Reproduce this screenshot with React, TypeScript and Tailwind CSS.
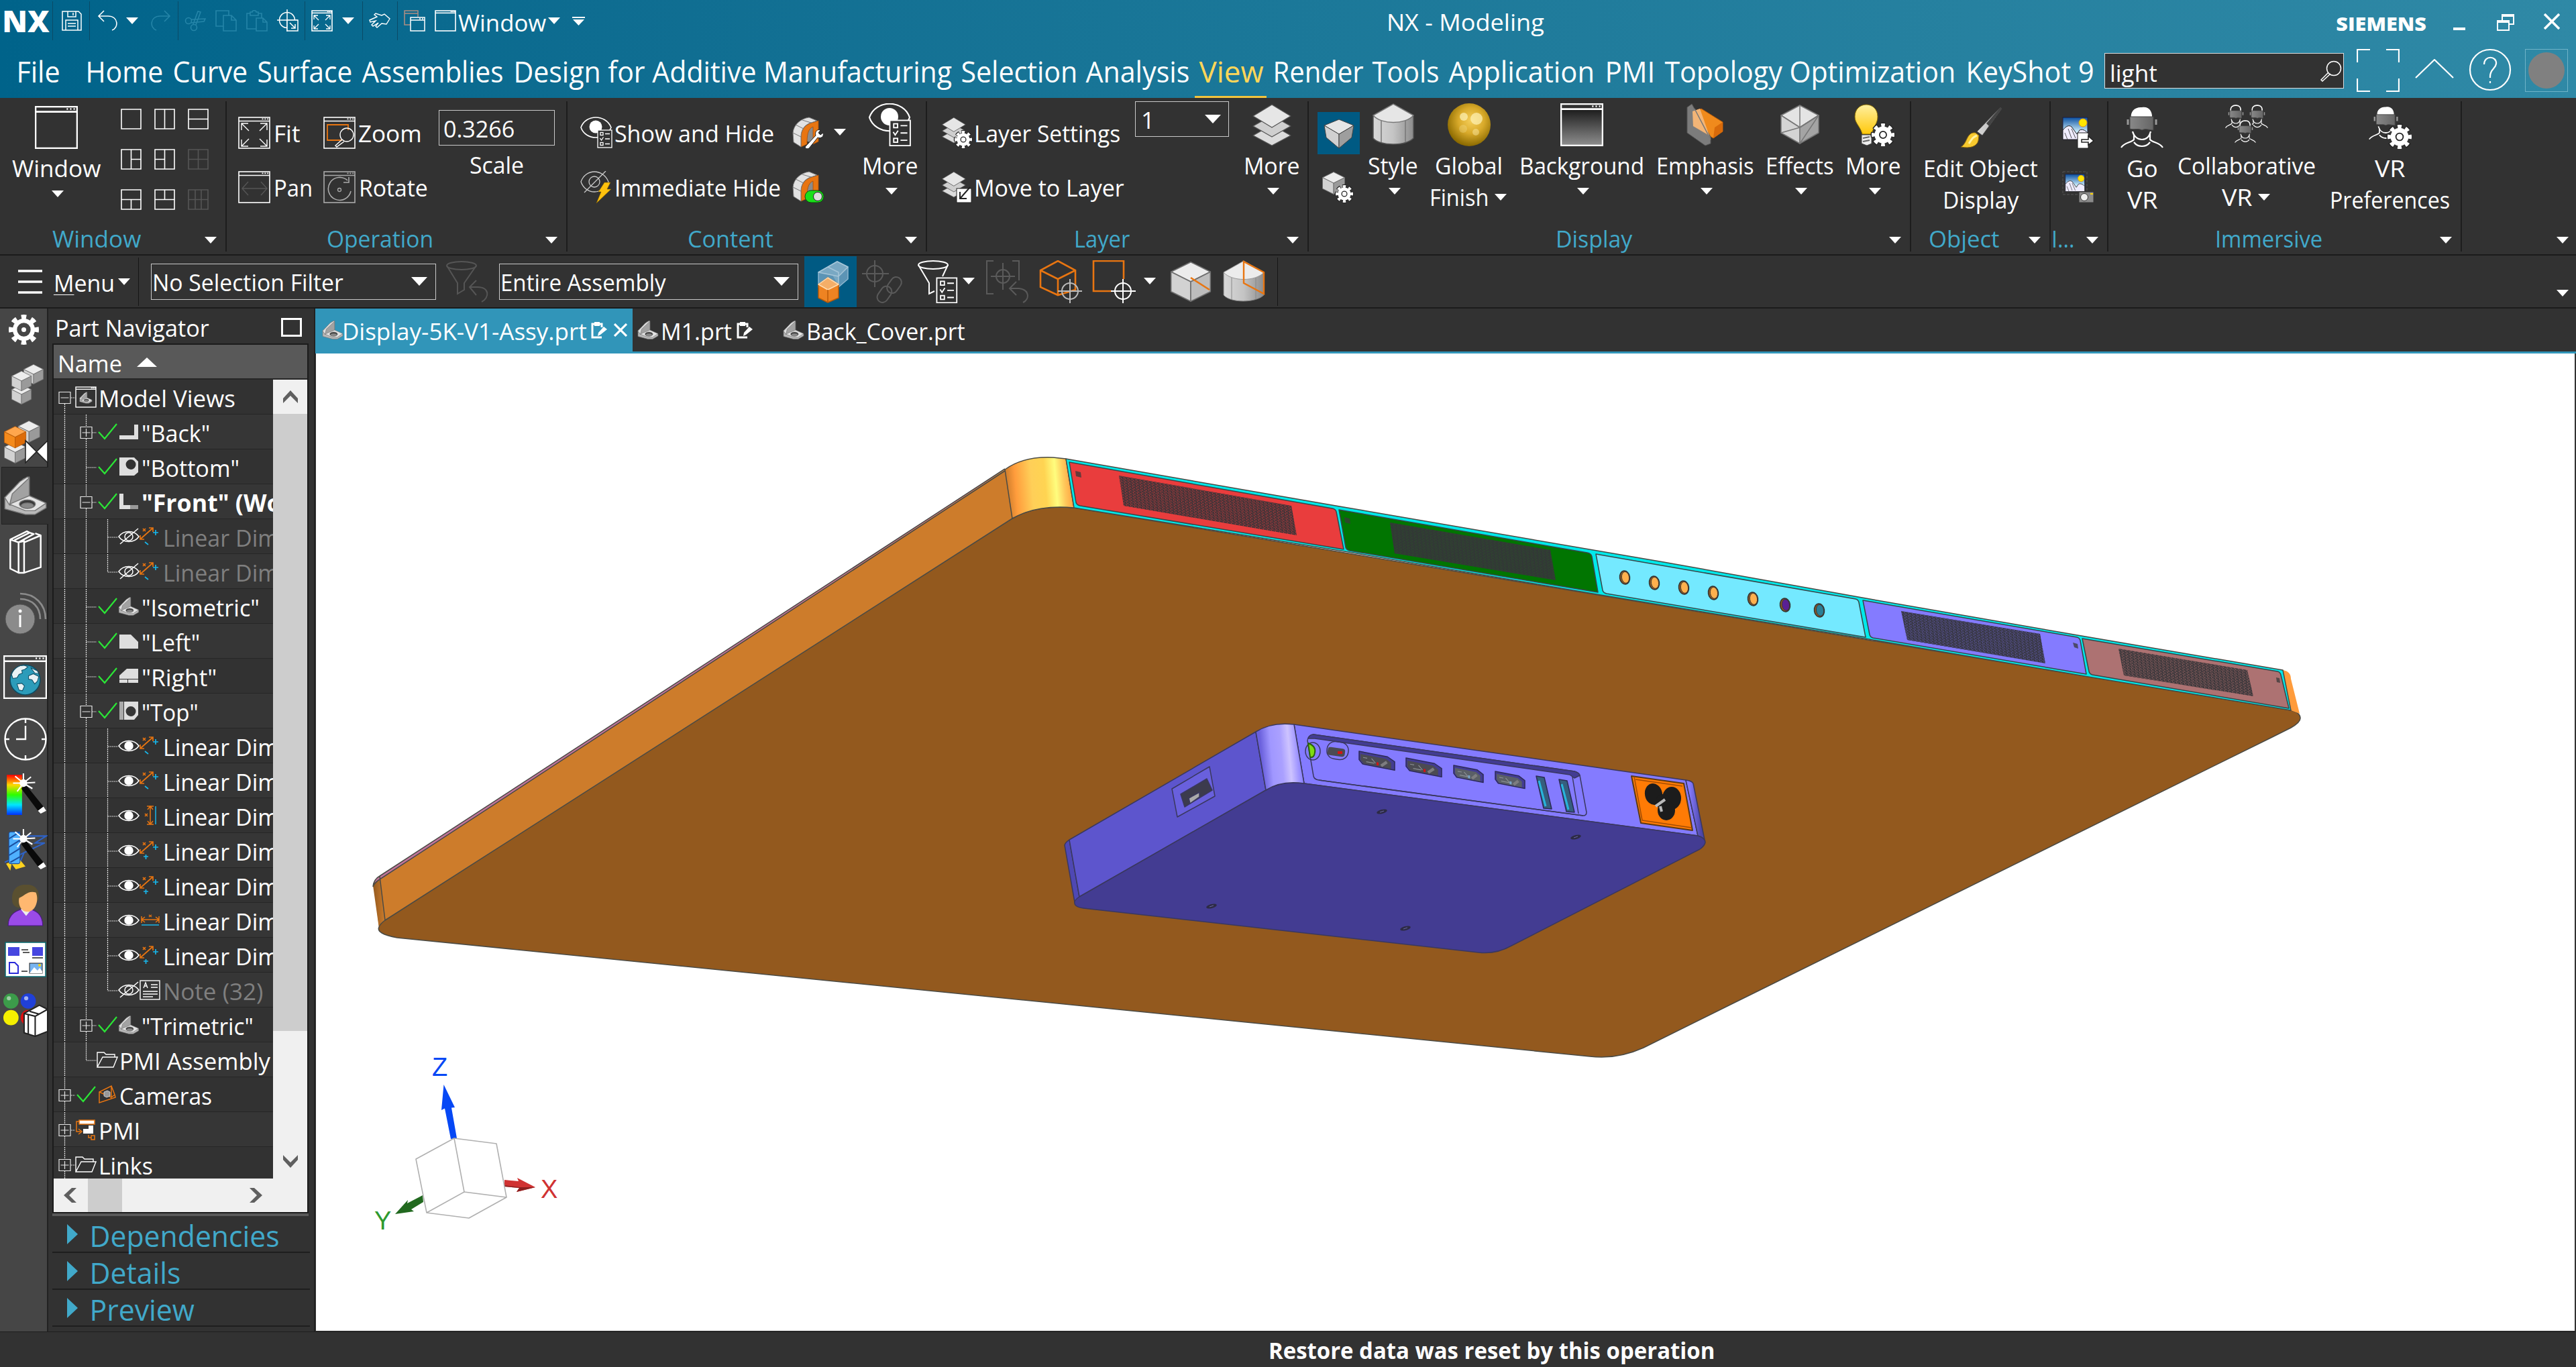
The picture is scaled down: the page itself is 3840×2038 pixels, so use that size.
import React, { useLayoutEffect, useRef, useState } from 'react';
import type { ReactNode } from 'react';

/* Text squeezed or stretched horizontally so that its ink fills the width its class gives. */
function Fit({ className = '', children }: { className?: string; children: ReactNode }) {
  const outer = useRef<HTMLDivElement>(null);
  const inner = useRef<HTMLSpanElement>(null);
  const [fit, setFit] = useState({ scale: 1, bearing: 0 });
  useLayoutEffect(() => {
    if (outer.current && inner.current && inner.current.offsetWidth > 0) {
      const bearing = parseFloat(getComputedStyle(inner.current).fontSize) * 0.06;
      setFit({ scale: (outer.current.clientWidth + 2 * bearing) / inner.current.offsetWidth, bearing });
    }
  }, []);
  return (
    <div ref={outer} className={`shrink-0 whitespace-nowrap ${className}`}>
      <span ref={inner} className="inline-block origin-left" style={{ transform: `translateX(${-fit.bearing}px) scaleX(${fit.scale})` }}>
        {children}
      </span>
    </div>
  );
}

function Svg({ vb, className, children }: { vb: string; className: string; children: ReactNode }) {
  return (
    <svg viewBox={vb} className={`shrink-0 block ${className}`} fill="none" stroke="none">
      {children}
    </svg>
  );
}

const Caret = ({ className = '' }: { className?: string }) => (
  <Svg vb="0 0 18 10" className={`w-[18px] h-[10px] ${className}`}>
    <path d="M0 0H18L9 10Z" fill="#fff" />
  </Svg>
);
const BigCaret = ({ className = '' }: { className?: string }) => (
  <Svg vb="0 0 24 13" className={`w-[24px] h-[13px] ${className}`}>
    <path d="M0 0H24L12 13Z" fill="#fff" />
  </Svg>
);

/* ---------- shared drawing parts ---------- */
function Gear({ cx, cy, r }: { cx: number; cy: number; r: number }) {
  return (
    <g>
      <circle cx={cx} cy={cy} r={r * 0.78} stroke="#222" strokeWidth={r * 0.62} pathLength={16} strokeDasharray="1.25 0.75" strokeDashoffset={0.6} />
      <circle cx={cx} cy={cy} r={r * 0.78} stroke="#fff" strokeWidth={r * 0.44} pathLength={16} strokeDasharray="1 1" strokeDashoffset={0.5} />
      <circle cx={cx} cy={cy} r={r * 0.74} fill="#fff" />
      <circle cx={cx} cy={cy} r={r * 0.3} fill="#fff" stroke="#222" strokeWidth={r * 0.1} />
    </g>
  );
}
function Frame({ s = 48, color = '#fff', sw = 1.6 }: { s?: number; color?: string; sw?: number }) {
  return (
    <g stroke={color} strokeWidth={sw}>
      <rect x={1} y={1} width={s - 2} height={s - 2} />
      <path d={`M1 ${s * 0.135}H${s - 1}`} />
      <path d={`M${s * 0.74} ${s * 0.07}h2M${s * 0.82} ${s * 0.07}h2M${s * 0.9} ${s * 0.07}h2`} />
    </g>
  );
}
const Cube = ({ x = 0, y = 0, s = 48, left = '#d2d2d2', right = '#9a9a9a', top = '#ececec', line = '#6e6e6e' }) => (
  <g transform={`translate(${x} ${y}) scale(${s / 48})`} stroke={line} strokeWidth={1.2} strokeLinejoin="round">
    <path d="M24 2L46 13L24 24L2 13Z" fill={top} />
    <path d="M2 13L24 24V46L2 35Z" fill={left} />
    <path d="M46 13L24 24V46L46 35Z" fill={right} />
  </g>
);
const Bracket = ({ x = 0, y = 0, s = 48 }) => (
  <g transform={`translate(${x} ${y}) scale(${s / 48})`} stroke="#777" strokeWidth={1} strokeLinejoin="round">
    <path d="M2 26L22 6L28 4V24L20 28L46 33V37L34 44H24L2 38Z" fill="#b9b9b9" />
    <path d="M2 26L22 8L28 5V25L8 34Z" fill="#a2a2a2" />
    <path d="M2 26L18 9L26 4L28 5L10 22L7 34Z" fill="#dedede" />
    <path d="M7 33L28 24L46 32L34 40H24Z" fill="#e4e4e4" />
    <ellipse cx="26" cy="33" rx="8.5" ry="4.6" fill="#3a3a3a" />
    <ellipse cx="26" cy="34.6" rx="6.5" ry="2.8" fill="#888" />
  </g>
);
const Sheets = () => (
  <g stroke="#555" strokeWidth={1.3} strokeLinejoin="round">
    <path d="M32 32L60 48L32 63L4 48Z" fill="#dcdcdc" />
    <path d="M32 18L60 34L32 50L4 34Z" fill="#cfcfcf" />
    <path d="M32 2L60 19L32 36L4 19Z" fill="#e6e6e6" />
  </g>
);
const Bowl = () => (
  <g strokeLinejoin="round">
    <path d="M19 14H32V40L20 36Z" fill="#8b8b8b" />
    <path d="M13 45V28C14 18 20 12 29 9L39 6V37L31 41V15C23 18 22 28 22 41Z" fill="#e87511" stroke="#a84f06" strokeWidth=".8" />
    <path d="M1 24C2 12 12 3 25 1L37 6L28 9C18 12 13 20 13 30V45L2 38Z" fill="#e2e2e2" stroke="#777" />
    <path d="M5 12L17 18M1 24L13 30M15 5L28 9" stroke="#777" />
  </g>
);
const ListCard = ({ x, y, s }: { x: number; y: number; s: number }) => (
  <g transform={`translate(${x} ${y}) scale(${s})`} stroke="#fff" strokeWidth={1.3}>
    <rect x="1" y="1" width="21" height="26" fill="#323232" />
    <rect x="5" y="4.5" width="4" height="4" />
    <rect x="5" y="19.5" width="4" height="4" />
    <path d="M4.5 13L6.5 16L9.5 11.5M12 6.5h7M12 14h7M12 21.5h7" />
  </g>
);
const EyeShape = ({ slash = false }) => (
  <g stroke="#fff" strokeWidth={1.5}>
    <path d="M1 16C8 6 24 6 31 16C24 26 8 26 1 16Z" />
    {slash ? (
      <g>
        <circle cx="16" cy="16" r="6" />
        <path d="M3 27L30 4" />
      </g>
    ) : (
      <circle cx="16" cy="16" r="6" fill="#fff" />
    )}
  </g>
);

/* ---------- title bar ---------- */
const Sep = ({ className = '' }: { className?: string }) => <div className={`w-px h-[58px] bg-[#0a4a66] shrink-0 ${className}`} />;

function TitleBar() {
  const dim = '#2585a8';
  return (
    <div className="flex items-center h-[62px] shrink-0">
      <Fit className="ml-[6px] w-[65px] text-[45px] leading-[60px] font-extrabold">NX</Fit>
      <Sep className="ml-[7px]" />
      <Svg vb="0 0 30 30" className="ml-[13px] w-[30px] h-[30px]">
        <path d="M1 1H25L29 5V29H1ZM9 1V9H21V1M17 3V7M6 29V14H24V29M9 19H21M9 23H21" stroke="#fff" strokeWidth="1.5" />
      </Svg>
      <Sep className="ml-[11px]" />
      <Svg vb="0 0 30 32" className="ml-[11px] w-[30px] h-[32px]">
        <path d="M10 1L2 9L10 17M2 9H16C32 9 32 27 22 30" stroke="#fff" strokeWidth="1.6" />
      </Svg>
      <Caret className="ml-[13px]" />
      <Svg vb="0 0 30 32" className="ml-[19px] w-[30px] h-[32px]">
        <path d="M20 1L28 9L20 17M28 9H14C-2 9 -2 27 8 30" stroke={dim} strokeWidth="1.6" />
      </Svg>
      <Sep className="ml-[10px]" />
      <Svg vb="0 0 32 32" className="ml-[9px] w-[32px] h-[32px]">
        <g stroke={dim} strokeWidth="1.6">
          <circle cx="6" cy="16" r="4.5" /><circle cx="14" cy="26" r="4.5" />
          <path d="M10 14L31 13L29 17L10 19M13 21L20 2L24 3L17 22" />
        </g>
      </Svg>
      <Svg vb="0 0 32 32" className="ml-[14px] w-[32px] h-[32px]">
        <path d="M12 24H1V1H20V8M12 8H24L31 15V31H12ZM24 8V15H31" stroke={dim} strokeWidth="1.6" />
      </Svg>
      <Svg vb="0 0 32 32" className="ml-[14px] w-[32px] h-[32px]">
        <path d="M15 28H1V5H6V8H18V5H23V12M6 5V3H9C9 0 15 0 15 3H18V5M15 12H25L31 18V31H15ZM25 12V18H31" stroke={dim} strokeWidth="1.6" />
      </Svg>
      <Svg vb="0 0 32 34" className="ml-[14px] w-[32px] h-[34px]">
        <g stroke="#fff" strokeWidth="1.5">
          <circle cx="15" cy="16" r="11.5" /><path d="M15 0V33M0 16H31" />
          <rect x="15" y="16" width="16" height="16" fill="#05688c" /><path d="M19 20L27 28M27 22V28H21" />
        </g>
      </Svg>
      <Sep className="ml-[9px]" />
      <Svg vb="0 0 32 32" className="ml-[9px] w-[32px] h-[32px]">
        <Frame s={32} />
        <path d="M4 14V8H10M4 8L11 15M28 14V8H22M28 8L21 15M4 23V28H10M4 28L11 21M28 23V28H22M28 28L21 21" stroke="#fff" strokeWidth="1.3" />
      </Svg>
      <Caret className="ml-[14px]" />
      <Sep className="ml-[12px]" />
      <Svg vb="0 0 32 24" className="ml-[9px] w-[32px] h-[24px]">
        <path d="M23 2L31 9L26 17L19 16L12 22L10 20L14 15L6 20L4 18L10 12L2 14L1 11L12 6L8 3L10 1L19 4Z" stroke="#fff" strokeWidth="1.4" />
      </Svg>
      <Sep className="ml-[10px]" />
      <Svg vb="0 0 32 32" className="ml-[9px] w-[32px] h-[32px]">
        <path d="M10 22H1V1H21V10M1 5H21" stroke="#b08f83" strokeWidth="1.5" />
        <path d="M10 11H31V31H10ZM10 15H31M23 13h2M27 13h2" stroke="#fff" strokeWidth="1.5" />
      </Svg>
      <Svg vb="0 0 32 32" className="ml-[14px] w-[32px] h-[32px]"><Frame s={32} /></Svg>
      <Fit className="ml-[5px] mt-[4px] w-[127px] text-[35px] leading-[47px]">Window</Fit>
      <Caret className="ml-[5px]" />
      <Svg vb="0 0 19 13" className="ml-[18px] w-[19px] h-[13px]">
        <path d="M0 1H19" stroke="#fff" strokeWidth="2" /><path d="M1 4H18L9.500 13Z" fill="#fff" />
      </Svg>
      <Fit className="ml-[1197px] mt-[3px] w-[231px] text-[35px] leading-[47px]">NX - Modeling</Fit>
      <Fit className="ml-auto mt-[7px] w-[131px] text-[28px] leading-[40px] font-extrabold">SIEMENS</Fit>
      <div className="ml-[42px] mt-[24px] w-[18px] h-[4px] bg-white shrink-0" />
      <Svg vb="0 0 26 25" className="ml-[47px] mt-[4px] w-[26px] h-[25px]">
        <path d="M8 9V3H25V15H19M1 12H18V24H1ZM8 3V5M1 12V13" stroke="#fff" strokeWidth="2" />
        <path d="M7 0H26V4H7ZM0 9H19V13H0Z" fill="#fff" />
      </Svg>
      <Svg vb="0 0 24 24" className="ml-[44px] mr-[24px] mt-[2px] w-[24px] h-[24px]">
        <path d="M1 1L23 23M23 1L1 23" stroke="#fff" strokeWidth="3.6" />
      </Svg>
    </div>
  );
}

function TabRow() {
  return (
    <div className="flex items-start h-[84px] pt-[16px] text-[43px] leading-[58px] shrink-0">
      <Fit className="ml-[27px] w-[60px]">File</Fit>
      <Fit className="ml-[43px] w-[111px]">Home</Fit>
      <Fit className="ml-[19px] w-[107px]">Curve</Fit>
      <Fit className="ml-[19px] w-[137px]">Surface</Fit>
      <Fit className="ml-[19px] w-[206px]">Assemblies</Fit>
      <Fit className="ml-[20px] w-[648px]">Design for Additive Manufacturing</Fit>
      <Fit className="ml-[19px] w-[169px]">Selection</Fit>
      <Fit className="ml-[17px] w-[150px]">Analysis</Fit>
      <div className="ml-[19px] w-[91px] text-[#ffd659]">
        <Fit className="w-[91px]">View</Fit>
        <div className="-ml-[9px] mt-[7px] w-[107px] h-[3px] bg-[#f2c43d]" />
      </div>
      <Fit className="ml-[19px] w-[130px]">Render</Fit>
      <Fit className="ml-[18px] w-[95px]">Tools</Fit>
      <Fit className="ml-[19px] w-[212px]">Application</Fit>
      <Fit className="ml-[21px] w-[70px]">PMI</Fit>
      <Fit className="ml-[19px] w-[429px]">Topology Optimization</Fit>
      <Fit className="ml-[20px] w-[186px]">KeyShot 9</Fit>
      <div className="ml-[18px] mt-[1px] w-[357px] h-[53px] bg-[#323232] border-[1.5px] border-[#dcdcdc] flex items-center shrink-0">
        <Fit className="ml-[9px] mt-[6px] w-[67px] text-[35px] leading-[47px]">light</Fit>
        <Svg vb="0 0 32 32" className="ml-auto mr-[2px] w-[32px] h-[32px]">
          <circle cx="20" cy="12" r="10.500" stroke="#fff" strokeWidth="1.5" />
          <path d="M12 18L1 29L3 31L15 20" stroke="#fff" strokeWidth="1.5" />
        </Svg>
      </div>
      <Svg vb="0 0 64 64" className="ml-[19px] -mt-[5px] w-[64px] h-[64px]">
        <path d="M1 20V1H20M44 1H63V20M63 44V63H44M20 63H1V44" stroke="#fff" strokeWidth="2.2" />
      </Svg>
      <Svg vb="0 0 58 30" className="ml-[23px] mt-[10px] w-[58px] h-[30px]">
        <path d="M1 28L29 1L57 28" stroke="#fff" strokeWidth="2.2" />
      </Svg>
      <Svg vb="0 0 64 64" className="ml-[22px] -mt-[6px] w-[64px] h-[64px]">
        <circle cx="32" cy="32" r="30" stroke="#fff" strokeWidth="2.2" />
        <path d="M23 24C23 10 42 11 41 23C40 31 32 31 32 42V44M32 49V52" stroke="#fff" strokeWidth="2.2" />
      </Svg>
      <div className="ml-[20px] -mt-[5px] w-[64px] h-[64px] border border-[#6fb3c8] flex items-center justify-center shrink-0">
        <div className="w-[54px] h-[54px] rounded-full bg-[#808080]" />
      </div>
    </div>
  );
}

/* ---------- ribbon ---------- */
function Group({ className, label, labelClass, children }: { className: string; label: string; labelClass: string; children?: ReactNode }) {
  return (
    <div className={`flex flex-col h-[224px] shrink-0 border-r-2 border-[#1d1d1d] ${className}`}>
      <div className="flex items-start h-[181px]">{children}</div>
      <div className="flex items-center h-[43px] text-[#41a9ca]">
        <Fit className={`mt-[3px] text-[35px] leading-[43px] ${labelClass}`}>{label}</Fit>
        <Caret className="ml-auto mt-[8px] mr-[13px]" />
      </div>
    </div>
  );
}
function Big({ className, icon, label, labelClass, line2, line2Class = '', caret, inlineCaret }: { className: string; icon: ReactNode; label: string; labelClass: string; line2?: string; line2Class?: string; caret?: boolean; inlineCaret?: boolean }) {
  return (
    <div className={`flex flex-col items-center shrink-0 ${className}`}>
      {icon}
      <Fit className={`mt-[5px] text-[35px] leading-[47px] ${labelClass}`}>{label}</Fit>
      {line2 && (
        <div className="flex items-center">
          <Fit className={`text-[35px] leading-[47px] ${line2Class}`}>{line2}</Fit>
          {inlineCaret && <Caret className="ml-[11px]" />}
        </div>
      )}
      {caret && <Caret className="ml-[4px] mt-[10px]" />}
    </div>
  );
}
const S64 = ({ children, className = 'w-[64px] h-[64px]' }: { children: ReactNode; className?: string }) => <Svg vb="0 0 64 64" className={className}>{children}</Svg>;
const S48 = ({ children, className = '' }: { children: ReactNode; className?: string }) => <Svg vb="0 0 48 48" className={`w-[48px] h-[48px] ${className}`}>{children}</Svg>;

const Head = ({ hair = true }: { hair?: boolean }) => (
  <g>
    {hair ? <path d="M16 18C14 8 22 1 32 2C42 0 48 8 47 18Z" fill="#fff" /> : <path d="M17 18C14 6 24 1 32 2C42 1 48 8 46 18" stroke="#fff" strokeWidth="3" />}
    <path d="M11 20V28M53 20V28" stroke="#999" strokeWidth="3" />
    <path d="M14 16H49V36C42 36 38 33 32 36C26 33 20 36 14 34Z" fill="url(#goggle)" stroke="#444" />
    <path d="M18 38C20 46 26 50 32 50C38 50 43 46 45 38" stroke="#fff" strokeWidth="2.200" />
    <path d="M20 42V50C16 55 6 54 1 62M44 42V50C48 55 58 54 63 62M20 54C26 62 38 62 44 54" stroke="#fff" strokeWidth="2.200" />
  </g>
);
const Picture = () => (
  <g>
    <rect x="1" y="1" width="37" height="33" fill="url(#sky)" stroke="#1d1d3d" />
    <circle cx="31" cy="9" r="6" fill="#ffe600" stroke="#e8960c" />
    <path d="M1 34V20C6 14 10 12 14 15L22 26L26 20C30 18 34 20 38 24V34Z" fill="#efecff" stroke="#222" />
    <path d="M9 18L14 32M14 18L20 32M4 24L8 34" stroke="#555" />
  </g>
);

function WindowGrid() {
  const on = '#fff';
  const off = '#555';
  const cells: [string, string][] = [
    ['', on], ['M15.500 1V30', on], ['M1 15.500H30', on],
    ['M15.500 1V30M15.500 15.500H30', on], ['M15.500 1V30M1 15.500H15.500', on], ['M15.500 1V30M1 15.500H30', off],
    ['M1 15.500H30M15.500 15.500V30', on], ['M1 15.500H30M15.500 1V15.500', on], ['M1 15.500H30M11 1V30M20 1V30', off],
  ];
  return (
    <div className="ml-[32px] mt-[11px] grid grid-cols-3 gap-x-[19px] gap-y-[29px]">
      {cells.map(([d, c], i) => (
        <Svg key={i} vb="0 0 31 31" className="w-[31px] h-[31px]">
          <path d={`M1 1H30V30H1Z${d}`} stroke={c} strokeWidth="1.6" />
        </Svg>
      ))}
    </div>
  );
}

function Ribbon() {
  return (
    <div className="flex h-[235px] pt-[5px] border-b-2 border-[#1b1b1b] shrink-0">
      <Group className="w-[338px]" label="Window" labelClass="ml-[80px] w-[128px]">
        <Big className="ml-[20px] w-[128px] pt-[7px]" icon={<S64><Frame s={64} sw={2.6} /></S64>} label="Window" labelClass="w-[128px]" caret />
        <WindowGrid />
      </Group>

      <Group className="w-[508px]" label="Operation" labelClass="ml-[151px] w-[155px]">
        <div className="ml-[17px] w-[127px] pt-[23px] flex flex-col gap-[33px] shrink-0">
          <div className="flex items-center h-[48px]">
            <S48><Frame /><path d="M5 20V10H15M5 10L16 21M43 20V10H33M43 10L32 21M5 34V44H15M5 44L16 33M43 34V44H33M43 44L32 33" stroke="#fff" strokeWidth="1.4" /></S48>
            <Fit className="ml-[7px] w-[35px] text-[35px] leading-[47px]">Fit</Fit>
          </div>
          <div className="flex items-center h-[48px]">
            <S48><Frame /><path d="M6 26H43M15 16L6 26L15 36M34 16L43 26L34 36" stroke="#555" strokeWidth="1.4" /></S48>
            <Fit className="ml-[7px] w-[54px] text-[35px] leading-[47px]">Pan</Fit>
          </div>
        </div>
        <div className="w-[172px] pt-[23px] flex flex-col gap-[33px] shrink-0">
          <div className="flex items-center h-[48px]">
            <S48>
              <Frame />
              <path d="M28 35H6V12H37V20" stroke="#e87511" strokeWidth="1.8" />
              <circle cx="35" cy="27" r="10" stroke="#fff" strokeWidth="1.4" />
              <path d="M28 34L18 43L20 45L31 37" stroke="#fff" strokeWidth="1.4" />
            </S48>
            <Fit className="ml-[6px] w-[91px] text-[35px] leading-[47px]">Zoom</Fit>
          </div>
          <div className="flex items-center h-[48px]">
            <S48>
              <Frame color="#aaa" />
              <path d="M41 30A17 17 0 1 1 36 14M30 17H38V9" stroke="#aaa" strokeWidth="1.6" />
              <circle cx="24" cy="28" r="2.500" stroke="#aaa" strokeWidth="1.3" />
            </S48>
            <Fit className="ml-[7px] w-[99px] text-[35px] leading-[47px]">Rotate</Fit>
          </div>
        </div>
        <div className="flex flex-col items-center mt-[13px] shrink-0">
          <div className="w-[173px] h-[53px] border-[1.5px] border-[#c9c9c9] flex items-center">
            <Fit className="ml-[8px] mt-[1px] w-[102px] text-[35px] leading-[47px]">0.3266</Fit>
          </div>
          <Fit className="mt-[5px] w-[77px] text-[35px] leading-[47px]">Scale</Fit>
        </div>
      </Group>

      <Group className="w-[536px]" label="Content" labelClass="ml-[181px] w-[124px]">
        <div className="ml-[19px] w-[316px] pt-[23px] flex flex-col gap-[33px] shrink-0">
          <div className="flex items-center h-[48px]">
            <S48>
              <path d="M1 16C8 -4 38 -4 46 16C38 36 8 36 1 16Z" stroke="#fff" strokeWidth="1.6" />
              <circle cx="23" cy="15" r="9.500" fill="#fff" />
              <ListCard x={25} y={19} s={1} />
            </S48>
            <Fit className="ml-[5px] w-[234px] text-[35px] leading-[47px]">Show and Hide</Fit>
          </div>
          <div className="flex items-center h-[48px]">
            <S48>
              <path d="M1 16C8 -4 34 -4 42 16C34 36 8 36 1 16Z" stroke="#ccc" strokeWidth="1.3" />
              <circle cx="21" cy="16" r="8" stroke="#ccc" strokeWidth="1.3" />
              <path d="M6 32L38 0" stroke="#ccc" strokeWidth="1.3" />
              <path d="M36 17H45L40 27H46L24 48L31 31H27Z" fill="#ffc20e" stroke="#7a5a00" strokeWidth=".6" />
            </S48>
            <Fit className="ml-[5px] w-[244px] text-[35px] leading-[47px]">Immediate Hide</Fit>
          </div>
        </div>
        <div className="w-[106px] pt-[23px] flex flex-col gap-[33px] shrink-0">
          <div className="flex items-center h-[48px]">
            <S48>
              <Bowl />
              <path d="M20 44L35 28C33 22 38 18 42 20L39 24L42 27L46 24C48 30 42 33 38 31L25 47C22 49 18 47 20 44Z" fill="#fff" stroke="#222" />
            </S48>
            <Caret className="ml-[14px] mb-[2px]" />
          </div>
          <S48>
            <Bowl />
            <rect x="19" y="29" width="28" height="18" rx="9" fill="#19e019" stroke="#0b4d0b" />
            <circle cx="38" cy="38" r="6.500" fill="#ddd" stroke="#222" />
          </S48>
        </div>
        <Big
          className="w-[80px] pt-[3px]"
          icon={
            <S64>
              <path d="M1 21C10 -6 52 -6 61 21C52 48 10 48 1 21Z" stroke="#fff" strokeWidth="2.2" />
              <circle cx="31" cy="20" r="13" fill="#fff" />
              <ListCard x={30} y={24} s={1.45} />
            </S64>
          }
          label="More" labelClass="w-[80px]" caret
        />
      </Group>

      <Group className="w-[569px]" label="Layer" labelClass="ml-[221px] w-[79px]">
        <div className="ml-[20px] w-[290px] pt-[23px] flex flex-col gap-[33px] shrink-0">
          <div className="flex items-center h-[48px]">
            <S48><g transform="scale(.62)"><Sheets /></g><Gear cx={34} cy={34} r={13} /></S48>
            <Fit className="ml-[4px] w-[214px] text-[35px] leading-[47px]">Layer Settings</Fit>
          </div>
          <div className="flex items-center h-[48px]">
            <S48>
              <g transform="scale(.62)"><Sheets /></g>
              <rect x="24" y="26" width="22" height="21" fill="#fff" stroke="#222" />
              <path d="M44 24L30 40M29 31V41H39" stroke="#222" strokeWidth="2" />
            </S48>
            <Fit className="ml-[4px] w-[220px] text-[35px] leading-[47px]">Move to Layer</Fit>
          </div>
        </div>
        <div className="w-[164px] shrink-0">
          <div className="w-[140px] h-[53px] border-[1.5px] border-[#c9c9c9] flex items-center">
            <Fit className="ml-[10px] mt-[1px] w-[16px] text-[35px] leading-[47px]">1</Fit>
            <BigCaret className="ml-auto mr-[11px]" />
          </div>
        </div>
        <Big className="w-[80px] pt-[3px]" icon={<S64><Sheets /></S64>} label="More" labelClass="w-[80px]" caret />
      </Group>

      <Group className="w-[898px]" label="Display" labelClass="ml-[370px] w-[110px]">
        <div className="ml-[13px] w-[77px] mt-[16px] flex flex-col gap-[25px] shrink-0">
          <div className="w-[63px] h-[63px] bg-[#005a83] flex items-center justify-center">
            <S48>
              <path d="M24 3L46 12L24 25L2 12Z" fill="#e6e6e6" stroke="#444" />
              <path d="M2 12L24 25V46L5 30Z" fill="#d0d0d0" stroke="#444" />
              <path d="M46 12L24 25V46L43 30Z" fill="#9e9e9e" stroke="#444" />
            </S48>
          </div>
          <S48 className="ml-[6px]"><Cube s={36} /><Gear cx={34} cy={34} r={13} /></S48>
        </div>
        <Big
          className="w-[71px] pt-[3px]"
          icon={
            <S64>
              <path d="M2 20V52C12 64 50 64 62 52V20L32 2Z" fill="url(#steel)" stroke="#555" strokeWidth="1.500" />
              <path d="M2 18L32 1L62 18C50 32 14 32 2 18Z" fill="#e6e6e6" stroke="#777" strokeWidth="1.500" />
              <path d="M14 26V58M50 26V58" stroke="#777" strokeWidth="1.500" />
            </S64>
          }
          label="Style" labelClass="w-[71px]" caret
        />
        <Big
          className="ml-[21px] w-[113px] pt-[3px]"
          icon={
            <S64>
              <circle cx="32" cy="32" r="32" fill="url(#gold)" />
              <g fill="#fff3b8" opacity=".7">
                <circle cx="43" cy="23" r="9" /><circle cx="24" cy="20" r="6" /><circle cx="42" cy="43" r="5" opacity=".6" /><circle cx="23" cy="38" r="6" opacity=".35" />
              </g>
            </S64>
          }
          label="Global" labelClass="w-[97px]" line2="Finish" line2Class="w-[84px]" inlineCaret
        />
        <Big
          className="ml-[21px] w-[182px] pt-[3px]"
          icon={<S64><rect x="1" y="9" width="62" height="54" fill="url(#bgfade)" /><Frame s={64} sw={2.6} /></S64>}
          label="Background" labelClass="w-[182px]" caret
        />
        <Big
          className="ml-[22px] w-[141px] pt-[3px]"
          icon={
            <S64>
              <path d="M14 12L26 8L58 28V42L44 52L14 34Z" fill="#f08a1c" stroke="#b85a08" />
              <path d="M46 36L58 28V42L44 52Z" fill="#d86a0a" />
              <path d="M5 6L12 1L40 50V60L32 63L5 44Z" fill="#8a8a8a" fillOpacity=".85" stroke="#555" />
              <path d="M13 12L24 8L38 48L14 34Z" fill="#f3b577" />
              <path d="M16 8L40 54" stroke="#777" strokeWidth="1.500" />
            </S64>
          }
          label="Emphasis" labelClass="w-[141px]" caret
        />
        <Big
          className="ml-[22px] w-[98px] pt-[3px]"
          icon={
            <S64>
              <g stroke="#777" strokeWidth="1.500" strokeLinejoin="round">
                <path d="M32 3L60 18L32 36L4 18Z" fill="#e4e4e4" /><path d="M4 18L32 36V60L4 44Z" fill="#d4d4d4" /><path d="M60 18L32 36V60L60 44Z" fill="#a4a4a4" />
                <path d="M32 3V36L4 44M32 60L60 18M32 36L60 18" />
              </g>
            </S64>
          }
          label="Effects" labelClass="w-[98px]" caret
        />
        <Big
          className="ml-[21px] w-[79px] pt-[3px]"
          icon={
            <S64>
              <path d="M4 20C4 -4 38 -4 38 20C38 30 32 34 29 46H15C12 34 4 30 4 20Z" fill="url(#bulb)" stroke="#8a6d00" />
              <path d="M14 47H29V60L22 63L14 60Z" fill="#eee" stroke="#444" /><path d="M16 52L26 50M16 57L26 55" stroke="#666" strokeWidth="2" />
              <Gear cx={46} cy={47} r={17} />
            </S64>
          }
          label="More" labelClass="w-[79px]" caret
        />
      </Group>

      <Group className="w-[208px]" label="Object" labelClass="ml-[28px] w-[101px]">
        <Big
          className="ml-[20px] w-[167px] pt-[7px]"
          icon={
            <S64>
              <path d="M61 2L63 4L34 44L26 38Z" fill="url(#steel)" stroke="#444" />
              <path d="M61 2L63 4L44 30L40 26Z" fill="#444" />
              <path d="M24 40C10 38 12 56 2 61C16 64 26 60 28 52L29 44Z" fill="#f7c92e" stroke="#7a5a10" />
              <path d="M14 56C18 50 20 46 26 44" stroke="#fff1a0" strokeWidth="3" />
            </S64>
          }
          label="Edit Object" labelClass="w-[167px]" line2="Display" line2Class="w-[109px]"
        />
      </Group>

      <Group className="w-[86px]" label="I..." labelClass="ml-[3px] w-[30px]">
        <div className="ml-[17px] pt-[23px] flex flex-col gap-[33px]">
          <S48>
            <Picture />
            <rect x="23" y="24" width="16" height="23" fill="#fff" stroke="#222" />
            <path d="M29 34H39V29L47 36L39 42V38H29Z" fill="#fff" stroke="#222" strokeWidth="1.500" />
          </S48>
          <S48>
            <rect x="1" y="1" width="36" height="34" stroke="#555" strokeDasharray="4 2" />
            <g transform="translate(4 4) scale(.78)"><Picture /></g>
            <rect x="25" y="31" width="22" height="16" fill="#8b8b8b" stroke="#333" /><circle cx="33" cy="39" r="5.500" fill="#eee" stroke="#333" /><path d="M42 34h4" stroke="#ffd400" strokeWidth="2" />
          </S48>
        </div>
      </Group>

      <Group className="w-[527px]" label="Immersive" labelClass="ml-[161px] w-[156px]">
        <Big className="ml-[19px] w-[62px] pt-[7px]" icon={<S64><Head /></S64>} label="Go" labelClass="w-[43px]" line2="VR" line2Class="w-[41px]" />
        <Big
          className="ml-[24px] w-[202px] pt-[3px]"
          icon={
            <S64>
              <g transform="translate(0 2) scale(.5 .56)"><Head hair={false} /></g>
              <g transform="translate(32 2) scale(.5 .56)"><Head hair={false} /></g>
              <circle cx="31" cy="32" r="9" fill="#323232" />
              <g transform="translate(14 25) scale(.5 .54)"><Head hair={false} /></g>
            </S64>
          }
          label="Collaborative" labelClass="w-[202px]" line2="VR" line2Class="w-[41px]" inlineCaret
        />
        <Big
          className="ml-[25px] w-[175px] pt-[7px]"
          icon={<S64><g transform="scale(.8)"><Head /></g><circle cx="46" cy="46" r="15" fill="#323232" /><Gear cx={46} cy={46} r={18} /></S64>}
          label="VR" labelClass="w-[41px]" line2="Preferences" line2Class="w-[175px]"
        />
      </Group>
      <Caret className="ml-auto mr-[11px] mt-[202px]" />
    </div>
  );
}

/* ---------- selection bar ---------- */
function SelectionBar() {
  return (
    <div className="flex items-center h-[79px] border-b-2 border-[#1b1b1b] shrink-0">
      <Svg vb="0 0 36 36" className="ml-[27px] w-[36px] h-[36px]"><path d="M0 2H36M0 18H36M0 34H36" stroke="#fff" strokeWidth="3.600" /></Svg>
      <Fit className="ml-[19px] mt-[4px] w-[87px] text-[35px] leading-[47px]"><span className="underline decoration-1 underline-offset-4">M</span>enu</Fit>
      <Caret className="ml-[7px]" />
      <div className="ml-[12px] w-px h-[72px] bg-[#161616]" />
      <div className="ml-[18px] w-[425px] h-[54px] border-[1.5px] border-[#c9c9c9] flex items-center shrink-0">
        <Fit className="ml-[3px] mt-[2px] w-[281px] text-[35px] leading-[47px]">No Selection Filter</Fit>
        <BigCaret className="ml-auto mr-[12px]" />
      </div>
      <S64 className="ml-[14px] w-[64px] h-[64px]">
        <g stroke="#555" strokeWidth="2"><ellipse cx="24" cy="8" rx="22" ry="6" /><path d="M2 8L18 34V50L28 44V34L46 8M46 30L36 40L46 52M36 40H48C66 40 66 56 54 62" /></g>
      </S64>
      <div className="ml-[16px] w-[446px] h-[54px] border-[1.5px] border-[#c9c9c9] flex items-center shrink-0">
        <Fit className="ml-[3px] mt-[2px] w-[243px] text-[35px] leading-[47px]">Entire Assembly</Fit>
        <BigCaret className="ml-auto mr-[12px]" />
      </div>
      <div className="ml-[9px] w-[78px] h-[76px] bg-[#005a83] flex items-center justify-center shrink-0">
        <S64>
          <g strokeLinejoin="round" strokeWidth="1.500">
            <path d="M14 18L42 2L58 10V28L44 40L14 40Z" fill="#5c94b5" stroke="#8fb7cf" />
            <path d="M14 18L42 2L58 10L44 24ZM28 10L44 18V38" fill="#79a8c3" stroke="#a5c5d8" />
            <path d="M14 36L28 26L44 36V56L28 63L14 56Z" fill="#ee8322" stroke="#b85a08" />
            <path d="M14 36L28 26L44 36L28 44Z" fill="#f4ae68" stroke="#ffdcb0" />
            <path d="M28 44V63" stroke="#b85a08" />
          </g>
        </S64>
      </div>
      <S64 className="ml-[8px] w-[64px] h-[64px]">
        <g stroke="#5a5a5a" strokeWidth="2"><circle cx="19" cy="20" r="12" /><path d="M19 0V40M0 20H40" /><rect x="40" y="24" width="16" height="26" rx="8" transform="rotate(35 48 37)" /><rect x="26" y="38" width="16" height="26" rx="8" transform="rotate(35 34 50)" /></g>
      </S64>
      <S64 className="ml-[18px] w-[64px] h-[64px]">
        <g stroke="#fff" strokeWidth="2"><ellipse cx="24" cy="7" rx="22" ry="6" /><path d="M2 7L18 34V50L26 46M46 7L38 24" /></g>
        <ListCard x={28} y={25} s={1.42} />
      </S64>
      <Caret className="ml-[4px] mb-[2px]" />
      <S64 className="ml-[16px] w-[64px] h-[64px]">
        <g stroke="#5a5a5a" strokeWidth="2"><path d="M12 1H2V50H12M40 1H50V30" /><circle cx="26" cy="24" r="10" /><path d="M26 4V44M8 24H44M46 32L36 42L46 52M36 42H50C66 44 66 58 56 63" /></g>
      </S64>
      <S64 className="ml-[15px] w-[66px] h-[64px]">
        <path d="M28 1L54 15V44L28 52L2 40V15ZM2 15L28 28L54 15M28 28V52" stroke="#e87511" strokeWidth="2.600" />
        <g stroke="#bbb" strokeWidth="2"><circle cx="46" cy="46" r="12" /><path d="M46 28V64M28 46H64" /></g>
      </S64>
      <S64 className="ml-[14px] w-[66px] h-[64px]">
        <path d="M28 46H1V1H46V28" stroke="#e87511" strokeWidth="2.600" />
        <g stroke="#fff" strokeWidth="2"><circle cx="45" cy="46" r="12" /><path d="M45 28V64M27 46H64" /></g>
      </S64>
      <Caret className="ml-[11px] mb-[2px]" />
      <S64 className="ml-[20px] w-[64px] h-[64px]">
        <Cube x={0} y={0} s={64} right="#bdbdbd" />
        <path d="M32 26L60 44" stroke="#e87511" strokeWidth="2.600" />
      </S64>
      <S64 className="ml-[15px] w-[64px] h-[64px]">
        <path d="M2 18V52C12 64 50 64 62 52V18L32 2Z" fill="url(#steel)" stroke="#777" />
        <path d="M2 18L32 1L62 18C50 32 14 32 2 18Z" fill="#ececec" stroke="#999" />
        <path d="M14 26V58M50 26V58" stroke="#888" />
        <path d="M32 2L62 18V50L32 34Z" stroke="#e87511" strokeWidth="2.400" />
      </S64>
      <div className="ml-[18px] w-px h-[72px] bg-[#161616]" />
      <Caret className="ml-auto mr-[11px] mt-[35px]" />
    </div>
  );
}

/* ---------- resource rail ---------- */
const Wand = () => (
  <g>
    <path d="M32 18L58 50L50 56L26 24Z" fill="#0a0a0a" />
    <path d="M50 56L58 50L62 56L54 60Z" fill="#fff" />
    <g stroke="#fff" strokeWidth="2"><path d="M29 16V2M29 16L40 7M29 16L46 15M29 16L17 6M29 16L14 16M29 16L20 28M29 16L42 24" /></g>
    <circle cx="29" cy="16" r="5.500" fill="#fff" />
  </g>
);
function Rail() {
  return (
    <div className="w-[72px] h-[1525px] pl-[5px] bg-[#464646] border-r-2 border-[#222] flex flex-col items-center shrink-0">
      <S64 className="mt-[9px] -ml-[5px] w-[45px] h-[45px]">
        <circle cx="32" cy="32" r="26" stroke="#fff" strokeWidth="12" pathLength={16} strokeDasharray="1 1" strokeDashoffset=".5" />
        <circle cx="32" cy="32" r="19" stroke="#fff" strokeWidth="9" /><circle cx="32" cy="32" r="5" fill="#fff" />
      </S64>
      <S64 className="mt-[26px] w-[64px] h-[64px]">
        <Cube x={28} y={2} s={32} /><Cube x={10} y={32} s={32} /><Cube x={10} y={12} s={32} />
      </S64>
      <S64 className="mt-[22px] w-[66px] h-[66px]">
        <Cube x={20} y={0} s={34} /><Cube x={0} y={30} s={34} /><Cube x={0} y={8} s={34} top="#ffa64d" left="#f48a1c" right="#dd6c08" line="#b85a08" />
        <path d="M32 30V62L48 46L64 62V30L48 46Z" fill="#fff" stroke="#222" strokeWidth="1.500" />
      </S64>
      <div className="mt-[4px] -ml-[3px] -mr-[2px] w-[70px] h-[86px] bg-[#323232] border-l border-y border-[#222] flex items-center justify-center shrink-0">
        <S48 className="scale-[1.4]"><Bracket /></S48>
      </div>
      <S64 className="mt-[8px] w-[66px] h-[66px]">
        <g stroke="#fff" strokeWidth="2.400" strokeLinejoin="round">
          <path d="M10 14L22 18V62L10 56ZM22 18L30 16V62L22 62M30 18L54 8V54L30 62ZM10 14L34 2L38 4M22 18L44 6L38 4L16 15M30 18L54 8L46 5" />
        </g>
      </S64>
      <S64 className="mt-[27px] w-[64px] h-[64px]">
        <circle cx="24" cy="40" r="22" fill="#8b8b8b" stroke="#555" />
        <path d="M24 34V52" stroke="#fff" strokeWidth="3" /><circle cx="24" cy="28" r="2.500" fill="#fff" />
        <path d="M24 2C46 2 62 18 62 40M24 10C42 10 54 22 54 40" stroke="#8b8b8b" strokeWidth="2.600" />
      </S64>
      <S64 className="mt-[30px] w-[65px] h-[65px]">
        <Frame s={64} sw={2.400} />
        <circle cx="32" cy="36" r="22" fill="#2c9cba" stroke="#0d4c63" strokeWidth="1.500" />
        <path d="M12 28C16 18 24 14 32 15L36 17L31 21L27 22L28 26L23 28L20 33L14 34ZM40 18L50 23L52 27L46 26ZM37 30L44 27L52 31L50 38L46 42L42 36L37 35ZM20 42L27 41L31 45L28 52L23 51Z" fill="#e8f2f5" stroke="#0d4c63" />
      </S64>
      <S64 className="mt-[28px] w-[64px] h-[64px]">
        <circle cx="32" cy="32" r="30.500" stroke="#fff" strokeWidth="2.400" />
        <path d="M32 12V32H18M32 2V8M32 56V62M2 32H8M56 32H62" stroke="#fff" strokeWidth="2.400" />
      </S64>
      <S64 className="mt-[17px] w-[66px] h-[66px]">
        <rect x="5" y="4" width="22" height="58" fill="url(#rainbow)" /><Wand />
      </S64>
      <S64 className="mt-[17px] w-[66px] h-[66px]">
        <path d="M34 12H62L46 22H60L30 36M2 50L30 36L24 50" stroke="#2d62c8" strokeWidth="2" />
        <path d="M4 52L22 44L32 56L18 60L12 52L10 62Z" fill="#ffd21e" />
        <rect x="8" y="6" width="16" height="46" rx="3" fill="#4fb0ff" stroke="#1b4fa0" /><path d="M8 16L24 6M8 28L24 18M8 40L24 30M10 50L24 42" stroke="#1b4fa0" strokeWidth="2" /><Wand />
      </S64>
      <S64 className="ml-[6px] mt-[16px] w-[66px] h-[66px]">
        <path d="M4 62C4 46 16 38 30 38C44 38 54 46 54 62Z" fill="#9a4be8" stroke="#4a1585" />
        <path d="M22 38L38 38L30 48Z" fill="#eee" />
        <path d="M10 26C8 8 20 2 30 3C44 2 50 12 48 24L40 36H18C12 34 10 30 10 26Z" fill="#5a5030" />
        <path d="M20 22C28 19 32 11 44 14C49 24 44 42 32 42C22 42 18 30 20 22Z" fill="#ffb870" />
      </S64>
      <S64 className="mt-[16px] w-[64px] h-[64px]">
        <rect x="2" y="7" width="60" height="51" fill="#fff" stroke="#0a6a70" strokeWidth="1.500" />
        <path d="M6 14H23V27H6ZM42 14H58V27H42Z" fill="#4646e0" /><path d="M26 18H36M28 22H38M42 30H58M26 50H35" stroke="#222" strokeWidth="1.600" />
        <path d="M8 37H16L21 42V53H8Z" stroke="#2a2ad8" strokeWidth="2" /><rect x="38" y="38" width="19" height="15" fill="#78b4f0" stroke="#222" /><path d="M38 53L45 44L50 49L53 45L57 50V53Z" fill="#fff" /><circle cx="53" cy="41" r="2" fill="#ffd400" />
      </S64>
      <S64 className="mt-[18px] w-[66px] h-[66px]">
        <circle cx="11" cy="12" r="11" fill="#3c9c4a" /><circle cx="36" cy="12" r="11" fill="#2040d8" /><circle cx="11" cy="36" r="11" fill="#f5f000" /><circle cx="36" cy="36" r="11" fill="#e01010" />
        <circle cx="8" cy="8" r="3" fill="#fff" opacity=".5" /><circle cx="33" cy="8" r="3" fill="#fff" opacity=".6" />
        <path d="M30 30L52 18L64 24V56L46 63L30 58Z" fill="#fff" stroke="#222" strokeWidth="2" strokeLinejoin="round" /><path d="M30 30L46 34L64 24M46 34V63M36 32V60M38 27L52 31" stroke="#222" strokeWidth="2" />
      </S64>
    </div>
  );
}

/* ---------- part navigator ---------- */
type Row = { lv: 0 | 1 | 2; box?: '+' | '-'; last?: boolean; check?: boolean; icon: string; label: string; w: string; dim?: boolean; bold?: boolean };
const rows: Row[] = [
  { lv: 0, box: '-', icon: 'views', label: 'Model Views', w: 'ml-[5px] w-[200px]' },
  { lv: 1, box: '+', check: true, icon: 'back', label: '"Back"', w: 'ml-[5px] w-[98px]' },
  { lv: 1, check: true, icon: 'bottom', label: '"Bottom"', w: 'ml-[5px] w-[142px]' },
  { lv: 1, box: '-', check: true, icon: 'front', label: '"Front" (Wo', w: 'ml-[5px] w-[204px]', bold: true },
  { lv: 2, icon: 'hid', label: 'Linear Dim', w: 'ml-[5px] w-[169px]', dim: true },
  { lv: 2, last: true, icon: 'hid', label: 'Linear Dim', w: 'ml-[5px] w-[169px]', dim: true },
  { lv: 1, check: true, icon: 'iso', label: '"Isometric"', w: 'ml-[5px] w-[172px]' },
  { lv: 1, check: true, icon: 'left', label: '"Left"', w: 'ml-[5px] w-[83px]' },
  { lv: 1, check: true, icon: 'right', label: '"Right"', w: 'ml-[5px] w-[108px]' },
  { lv: 1, box: '-', check: true, icon: 'top', label: '"Top"', w: 'ml-[5px] w-[81px]' },
  { lv: 2, icon: 'dim1', label: 'Linear Dim', w: 'ml-[5px] w-[169px]' },
  { lv: 2, icon: 'dim1', label: 'Linear Dim', w: 'ml-[5px] w-[169px]' },
  { lv: 2, icon: 'dimv', label: 'Linear Dim', w: 'ml-[5px] w-[169px]' },
  { lv: 2, icon: 'dim2', label: 'Linear Dim', w: 'ml-[5px] w-[169px]' },
  { lv: 2, icon: 'dim2', label: 'Linear Dim', w: 'ml-[5px] w-[169px]' },
  { lv: 2, icon: 'dimh', label: 'Linear Dim', w: 'ml-[5px] w-[169px]' },
  { lv: 2, icon: 'dim2', label: 'Linear Dim', w: 'ml-[5px] w-[169px]' },
  { lv: 2, last: true, icon: 'note', label: 'Note (32)', w: 'ml-[5px] w-[145px]', dim: true },
  { lv: 1, box: '+', check: true, icon: 'iso', label: '"Trimetric"', w: 'ml-[5px] w-[163px]' },
  { lv: 1, last: true, icon: 'folder', label: 'PMI Assembly', w: 'ml-[4px] w-[221px]' },
  { lv: 0, box: '+', check: true, icon: 'camera', label: 'Cameras', w: 'ml-[4px] w-[134px]' },
  { lv: 0, box: '+', icon: 'pmi', label: 'PMI', w: 'ml-[5px] w-[58px]' },
  { lv: 0, box: '+', icon: 'folder', label: 'Links', w: 'ml-[5px] w-[77px]' },
];
const dimIcons = ['hid', 'dim1', 'dim2', 'dimv', 'dimh', 'note'];

function RowIcon({ kind }: { kind: string }) {
  const g = '#dedede';
  if (dimIcons.includes(kind)) {
    return (
      <>
        <Svg vb="0 0 32 32" className="w-[32px] h-[32px]"><EyeShape slash={kind === 'hid' || kind === 'note'} /></Svg>
        <Svg vb="0 0 32 32" className="w-[32px] h-[32px]">
          {kind === 'note' && <g stroke="#fff" strokeWidth="1.400"><rect x="1" y="2" width="29" height="28" /><path d="M6 13L9 5L12 13M7 10H11M17 8H27M17 12H27M5 18H27M5 22H27M5 26H20" /></g>}
          {(kind === 'hid' || kind === 'dim1' || kind === 'dim2') && (
            <g strokeWidth="1.700">
              <path d="M2 19L19 4M1 14V20H7M14 3H20V9M5 4L9 8M9 4L5 8" stroke="#e87511" />
              <path d={kind === 'dim2' ? 'M20 11H28M24 7V15M6 25H13M9.500 22V29' : 'M20 10H28M24 6V14M8 24L13 28'} stroke="#18b6ea" />
            </g>
          )}
          {kind === 'dimv' && <g strokeWidth="1.500"><path d="M11 2H21M11 29H21M16 2V29M12 7L16 2L20 7M12 24L16 29L20 24M8 13L12 17M12 13L8 17" stroke="#e87511" /><path d="M24 2V29" stroke="#18b6ea" /></g>}
          {kind === 'dimh' && <g strokeWidth="1.500"><path d="M3 10V20M29 10V20M3 15H29M8 11L3 15L8 19M24 11L29 15L24 19M14 8L18 11M18 8L14 11" stroke="#e87511" /><path d="M3 23H29" stroke="#18b6ea" /></g>}
        </Svg>
      </>
    );
  }
  return (
    <Svg vb="0 0 32 32" className="w-[32px] h-[32px]">
      {kind === 'views' && <><Frame s={32} sw={1.400} /><Bracket x={6} y={7} s={20} /></>}
      {kind === 'iso' && <Bracket x={0} y={0} s={32} />}
      {kind === 'back' && <path d="M2 21H24V5H30V27H2Z" fill={g} />}
      {kind === 'bottom' && <path d="M2 2H24L30 8V24L24 29H2ZM19 5A7.500 7.500 0 1 0 19.100 20A7.500 7.500 0 1 0 19 5Z" fill={g} fillRule="evenodd" />}
      {kind === 'front' && <><path d="M2 4H8V21H18V27H2Z" fill={g} /><path d="M18 21H30V27H18Z" fill="#999" /></>}
      {kind === 'left' && <path d="M2 6H19L30 17V27H2Z" fill={g} />}
      {kind === 'right' && <><path d="M13 5H30V20H2V15Z" fill={g} /><path d="M2 21H14V26H2ZM15 21H30V26H15Z" fill={g} /></>}
      {kind === 'top' && <><path d="M2 2H8V29H2Z" fill="#aaa" /><path d="M9 2H30V22L24 29H9ZM19 9A7.500 7.500 0 1 0 19.100 24A7.500 7.500 0 1 0 19 9Z" fill={g} fillRule="evenodd" /></>}
      {kind === 'folder' && <path d="M1 27V5H11L14 8H27V12M1 27L9 12H31L25 27Z" stroke="#fff" strokeWidth="1.400" />}
      {kind === 'camera' && <><path d="M4 12L22 3L27 16L28 20L4 28ZM22 3L22 20L27 16M22 20L4 12" stroke="#e87511" strokeWidth="1.500" /><path d="M11 12L16 10L20 12V18L15 20L11 18Z" fill="#999" stroke="#ddd" strokeWidth=".8" /></>}
      {kind === 'pmi' && <><path d="M6 2H29V8H6Z" fill="#fff" stroke="#e87511" strokeWidth="1.500" /><path d="M6 4H2V19H8M5 15L10 19L5 23M20 24V28H24M24 25H29V31H24Z" stroke="#e87511" strokeWidth="1.500" /><path d="M12 15H20V10H27V22H12Z" fill="#fff" /></>}
    </Svg>
  );
}

function TreeRow({ row, first }: { row: Row; first: boolean }) {
  const lineX = 16.500 + row.lv * 32;
  const end = 32 + row.lv * 32;
  return (
    <div className="h-[52px] border-b border-[#262626] odd:bg-[#323232] even:bg-[#363636] flex items-center overflow-hidden shrink-0">
      <svg width={end} height={52} className="shrink-0 block" fill="none" stroke="#e6e6e6" strokeWidth="1.200">
        <path strokeDasharray="2 1" d={`M16.500 ${first ? 27 : 0}V52${row.lv >= 1 ? `M48.500 0V${row.lv === 1 && row.last ? 27 : 52}` : ''}${row.lv === 2 ? `M80.500 0V${row.last ? 27 : 52}` : ''}M${lineX} 27H${end}`} />
        {row.box && <path d={`M${lineX - 8.500} 18.500h17v17h-17ZM${lineX - 6} 27h12${row.box === '+' ? `M${lineX} 21v12` : ''}`} fill="#323232" />}
      </svg>
      {row.check && (
        <Svg vb="0 0 32 32" className="w-[32px] h-[32px]"><path d="M3 16L12 26L30 4" stroke="#2be636" strokeWidth="2.200" /></Svg>
      )}
      <RowIcon kind={row.icon} />
      <Fit className={`text-[35px] leading-[47px] mt-[3px] ${row.w} ${row.dim ? 'text-[#7f7f7f]' : ''} ${row.bold ? 'font-bold' : ''}`}>{row.label}</Fit>
    </div>
  );
}

function Section({ label, w }: { label: string; w: string }) {
  return (
    <div className="flex items-center h-[55px] border-b-2 border-[#1e1e1e] text-[#41a9ca] shrink-0">
      <Svg vb="0 0 16 30" className="ml-[22px] w-[16px] h-[30px]"><path d="M0 0L16 15L0 30Z" fill="#41a9ca" /></Svg>
      <Fit className={`ml-[20px] mt-[7px] text-[43px] leading-[54px] ${w}`}>{label}</Fit>
    </div>
  );
}

function Navigator() {
  return (
    <div className="w-[398px] h-[1525px] px-[6px] flex flex-col shrink-0 border-r-2 border-[#222]">
      <div className="flex items-center h-[52px] shrink-0">
        <Fit className="ml-[6px] mt-[5px] w-[226px] text-[35px] leading-[47px]">Part Navigator</Fit>
        <div className="ml-auto mr-[12px] mt-[4px] w-[31px] h-[28px] border-[3px] border-white" />
      </div>
      <div className="border-2 border-[#1b1b1b] w-[382px] h-[1297px] flex flex-col shrink-0">
        <div className="flex items-center h-[52px] bg-[#595959] border-b-2 border-[#262626] shrink-0">
          <Fit className="ml-[8px] mt-[4px] w-[92px] text-[35px] leading-[47px]">Name</Fit>
          <Svg vb="0 0 30 14" className="ml-[24px] mt-[1px] w-[30px] h-[14px]"><path d="M0 14L15 0L30 14Z" fill="#fff" /></Svg>
        </div>
        <div className="flex h-[1191px] shrink-0">
          <div className="w-[327px] flex flex-col overflow-hidden shrink-0">
            {rows.map((r, i) => <TreeRow key={i} row={r} first={i === 0} />)}
          </div>
          <div className="flex-1 bg-[#f0f0f0] flex flex-col items-center">
            <Svg vb="0 0 22 19" className="mt-[16px] w-[22px] h-[19px]"><path d="M0 19V12L11 0L22 12V19L11 8Z" fill="#5f5f5f" /></Svg>
            <div className="mt-[16px] w-full h-[920px] bg-[#cdcdcd]" />
            <Svg vb="0 0 22 19" className="mt-auto mb-[16px] w-[22px] h-[19px]"><path d="M0 0V7L11 19L22 7V0L11 11Z" fill="#5f5f5f" /></Svg>
          </div>
        </div>
        <div className="flex items-center flex-1 bg-[#f0f0f0]">
          <Svg vb="0 0 19 22" className="ml-[15px] w-[19px] h-[22px]"><path d="M19 0H12L0 11L12 22H19L8 11Z" fill="#5f5f5f" /></Svg>
          <div className="ml-[17px] w-[51px] h-full bg-[#cdcdcd]" />
          <Svg vb="0 0 19 22" className="ml-[190px] w-[19px] h-[22px]"><path d="M0 0H7L19 11L7 22H0L11 11Z" fill="#5f5f5f" /></Svg>
        </div>
      </div>
      <div className="h-[4px] bg-[#595959] w-[382px] shrink-0" />
      <Section label="Dependencies" w="w-[278px]" />
      <Section label="Details" w="w-[131px]" />
      <Section label="Preview" w="w-[151px]" />
    </div>
  );
}

/* ---------- graphics area ---------- */
const EditMark = ({ className = '' }: { className?: string }) => (
  <Svg vb="0 0 24 26" className={`w-[24px] h-[26px] ${className}`}>
    <path d="M16 9V4H2V24H16" stroke="#fff" strokeWidth="3" />
    <path d="M5 1H13V7H5Z" fill="#fff" />
    <path d="M19 8L24 12L14 20L10 22L11 17Z" fill="#fff" />
  </Svg>
);
function FileTabs() {
  return (
    <div className="flex items-center h-[67px] border-b-[3px] border-[#3195b9] shrink-0">
      <div className="flex items-center h-[64px] w-[473px] bg-[#3195b9] shrink-0">
        <S48 className="ml-[2px] scale-[.68]"><Bracket /></S48>
        <Fit className="-ml-[8px] mt-[2px] w-[361px] text-[35px] leading-[47px]">Display-5K-V1-Assy.prt</Fit>
        <EditMark className="ml-[8px]" />
        <Svg vb="0 0 20 20" className="ml-[10px] w-[20px] h-[20px]"><path d="M1 1L19 19M19 1L1 19" stroke="#fff" strokeWidth="3.200" /></Svg>
      </div>
      <S48 className="-ml-[1px] scale-[.68]"><Bracket /></S48>
      <Fit className="-ml-[3px] mt-[2px] w-[102px] text-[35px] leading-[47px]">M1.prt</Fit>
      <EditMark className="ml-[9px]" />
      <S48 className="ml-[37px] scale-[.68]"><Bracket /></S48>
      <Fit className="-ml-[3px] mt-[2px] w-[232px] text-[35px] leading-[47px]">Back_Cover.prt</Fit>
    </div>
  );
}

const Port = ({ x, y, w, h, c = '#4b4b52' }: { x: number; y: number; w: number; h: number; c?: string }) => (
  <g transform={`translate(${x} ${y}) skewY(11)`}>
    <path d={`M0 0H${w * 0.8}L${w} ${h * 0.3}V${h}H${w * 0.1}L0 ${h * 0.7}Z`} fill="#433c92" stroke="#2c2a55" strokeWidth="1.500" />
    <path d={`M2 ${h * 0.2}H${w * 0.76}L${w * 0.9} ${h * 0.45}V${h * 0.95}H${w * 0.13}L2 ${h * 0.68}Z`} fill={c} />
    <path d={`M6 ${h * 0.45}h6M${w * 0.35} ${h * 0.4}l6 6M${w * 0.2} ${h * 0.75}h12`} stroke="#8c9196" strokeWidth="1.200" />
    <path d={`M${w * 0.52} ${h * 0.62}v${h * 0.25}`} stroke={c === '#4b4b52' ? '#d31414' : '#7aa5c8'} strokeWidth="3" />
    <path d={`M${w * 0.62} ${h * 0.85}L${w * 0.78} ${h * 0.45}`} stroke="#7d7d80" strokeWidth="4" />
  </g>
);
const Screw = ({ x, y }: { x: number; y: number }) => (
  <g><ellipse cx={x} cy={y} rx="8" ry="3" transform={`rotate(-14 ${x} ${y})`} fill="#2d2b45" /><path d={`M${x - 3} ${y + 1}l6 -2`} stroke="#6a66a8" strokeWidth="1" /></g>
);

function Scene() {
  const ink = '#4a4a44';
  const knobs: [number, number, string][] = [[2422, 861, '#ffb04d'], [2466, 869, '#ffb04d'], [2510, 876, '#ffb04d'], [2554, 884, '#ffb04d'], [2613, 893, '#ffb04d'], [2661, 902, '#5a1f94'], [2712, 910, '#2a7f96']];
  return (
    <svg viewBox="471 527 3367 1457" className="w-[3367px] h-[1457px] bg-white block shrink-0" fill="none" strokeLinejoin="round">
      <defs>
        <linearGradient id="corner" x1="1500" x2="1600" y1="725" y2="717" gradientUnits="userSpaceOnUse">
          <stop offset="0" stopColor="#cd7c2b" /><stop offset=".14" stopColor="#ff9c3c" /><stop offset=".38" stopColor="#ffcf58" /><stop offset=".58" stopColor="#ffd452" /><stop offset=".74" stopColor="#fffd7e" /><stop offset=".86" stopColor="#ffc95c" /><stop offset="1" stopColor="#ff9c3c" />
        </linearGradient>
        <linearGradient id="capL" x1="556" x2="574" y1="0" y2="0" gradientUnits="userSpaceOnUse"><stop offset="0" stopColor="#93591e" /><stop offset="1" stopColor="#cd7c2b" /></linearGradient>
        <linearGradient id="boxCorner" x1="1880" x2="1940" y1="1125" y2="1120" gradientUnits="userSpaceOnUse">
          <stop offset="0" stopColor="#6a60dc" /><stop offset=".25" stopColor="#a097ff" /><stop offset=".5" stopColor="#aaa0ff" /><stop offset=".7" stopColor="#cdc3ff" /><stop offset="1" stopColor="#867cff" />
        </linearGradient>
        <linearGradient id="capR" x1="2518" x2="2536" y1="0" y2="0" gradientUnits="userSpaceOnUse"><stop offset="0" stopColor="#867cff" /><stop offset="1" stopColor="#4d46a8" /></linearGradient>
        <pattern id="mesh" width="6" height="4" patternUnits="userSpaceOnUse" patternTransform="skewY(10) skewX(6)">
          <path d="M0 0H5V1.400H0ZM2 2H6V3.400H2ZM0 2H1V3.400H0ZM3.500 1.400V2H4.500V1.400ZM1 3.400V4H2V3.400Z" fill="#333338" />
        </pattern>
      </defs>

      {/* display slab */}
      <path d="M557 1318Q560 1309 566 1306L1498 700L1509 773L574 1372L565 1382Z" fill="#cd7c2b" />
      <path d="M556 1320Q558 1311 566 1307L574 1372Q565 1378 565 1384Z" fill="url(#capL)" />
      <path d="M556 1322Q557 1311 566 1306L1498 699L1480 712L566 1312Q558 1316 556 1322Z" fill="#c2759a" />
      <path d="M556 1322Q557 1311 566 1306L1498 699M556 1322Q558 1316 566 1311L1498 702M566 1306L574 1372" stroke={ink} strokeWidth="1.500" />
      <path d="M1509 773Q1545 752 1601 757L3415 1059Q3429 1062 3429 1071Q3429 1077 3415 1085L3385 1100L2575 1500L2450 1562Q2410 1580 2370 1575L592 1398Q560 1392 565 1382Q567 1377 574 1372Z" fill="#93591e" stroke={ink} strokeWidth="1.500" />
      <path d="M1498 700Q1525 680 1570 682L1589 684L1601 757Q1545 752 1509 773Z" fill="url(#corner)" stroke={ink} strokeWidth="1.500" />
      <path d="M3403 999Q3415 1001 3415 1012L3428 1064L3415 1059Z" fill="#ff9c3c" />

      {/* edge strip with its five covers */}
      <path d="M1589 684L1997 755L2480 838L2776 891L3103 948L3403 999L3415 1059L3113 1009L2786 953L2386 887L2004 822L1601 757Z" fill="#00e9ea" stroke={ink} strokeWidth="1.500" />
      <g stroke="#37474a" strokeWidth="1.500">
        <path d="M1594 689L1986 758Q1991 759 1992 763L2003 819L1610 754Q1605 753 1604 749Z" fill="#e93d3d" />
        <path d="M1996 760L2366 824Q2372 825 2373 830L2382 883L2012 821Q2007 820 2006 816Z" fill="#017501" />
        <path d="M2379 826L2766 893Q2770 894 2771 898L2781 950L2395 885Q2390 884 2389 880Z" fill="#74e9ff" />
        <path d="M2777 895L3096 950Q3100 951 3101 955L3110 1005L2792 951Q2788 950 2787 946Z" fill="#847bff" />
        <path d="M3104 952L3395 1001Q3399 1002 3400 1006L3412 1056L3119 1006Q3115 1005 3114 1001Z" fill="#ad7272" />
      </g>
      <g>
        <path d="M1668 709L1925 754L1933 798L1675 754Z" fill="#5a3537" opacity=".45" />
        <path d="M1668 709L1925 754L1933 798L1675 754Z" fill="url(#mesh)" />
        <path d="M2072 779L2311 820L2319 865L2079 825Z" fill="#2c4a2c" />
        <path d="M2072 779L2311 820L2319 865L2079 825Z" fill="url(#mesh)" />
        <path d="M2834 911L3041 945L3049 989L2843 954Z" fill="#3a3850" opacity=".6" />
        <path d="M2834 911L3041 945L3049 989L2843 954Z" fill="url(#mesh)" />
        <path d="M3158 967L3350 999L3359 1038L3166 1007Z" fill="#55403f" opacity=".4" />
        <path d="M3158 967L3350 999L3359 1038L3166 1007Z" fill="url(#mesh)" />
        <path d="M1603 702l8 2l1 8l-8 -2ZM2004 771l8 2l1 8l-8 -2ZM3090 958l7 2l1 7l-6 -2ZM3393 1010l5 1l1 7l-5 -1Z" fill="#3a3a3a" opacity=".75" />
      </g>
      {knobs.map(([x, y, c]) => (
        <g key={x}>
          <ellipse cx={x} cy={y} rx="7.500" ry="10" transform={`rotate(-8 ${x} ${y})`} fill="#8d5a24" stroke="#333" strokeWidth="1.500" />
          <ellipse cx={x + 1} cy={y} rx="5.500" ry="8.500" transform={`rotate(-8 ${x} ${y})`} fill={c} stroke="#333" strokeWidth=".8" />
        </g>
      ))}

      {/* electronics box */}
      <g stroke="#3a385f" strokeWidth="1.500">
        <path d="M1587 1260Q1588 1256 1594 1252L1609 1337L1602 1345Z" fill="#4f48b4" />
        <path d="M1594 1252L1872 1091L1887 1178L1609 1337Z" fill="#5d55cd" />
        <path d="M1929 1080L2513 1163L2531 1246L1944 1168Z" fill="#847bff" />
        <path d="M2513 1163Q2522 1164 2524 1168L2541 1252L2531 1246Z" fill="url(#capR)" />
        <path d="M1887 1178Q1910 1163 1944 1168L2531 1246Q2542 1249 2542 1256Q2541 1261 2534 1266L2253 1410Q2230 1423 2204 1420L1615 1354Q1600 1352 1602 1344Q1603 1341 1609 1337Z" fill="#433c92" />
        <path d="M1872 1091Q1895 1076 1929 1080L1944 1168Q1910 1163 1887 1178Z" fill="url(#boxCorner)" />
        <path d="M1747 1176L1803 1143L1811 1187L1755 1218Z" fill="#6960dd" />
        <path d="M1760 1184L1799 1161L1807 1178L1766 1203Z" fill="#3c3b4d" />
        <path d="M1772 1190L1788 1181V1188L1774 1198Z" fill="#aaa" />
        <path d="M1949 1104Q1950 1096 1958 1095L2347 1150Q2354 1152 2355 1156L2365 1211Q2365 1216 2360 1216L1966 1163Q1959 1162 1958 1157Z" fill="#847bff" />
        <path d="M1950 1101Q1952 1095 1958 1095L2347 1150Q2354 1152 2355 1156L2347 1160L2340 1155L1960 1101Z" fill="#433c92" />
        <path d="M2344 1158L2353 1213M1966 1163L2360 1216" />
      </g>
      <ellipse cx="1957" cy="1120" rx="11" ry="13" stroke="#3a385f" strokeWidth="1.500" />
      <path d="M1950 1108Q1962 1112 1960 1122Q1959 1130 1953 1129Z" fill="#7fdc12" stroke="#2c6010" strokeWidth="2" />
      <rect x="1978" y="1106" width="32" height="26" rx="12" transform="rotate(8 1994 1119)" stroke="#3a385f" strokeWidth="1.500" />
      <rect x="1979" y="1115" width="26" height="12" rx="4" transform="rotate(8 1992 1121)" fill="#4b4b52" />
      <path d="M1994 1122h7" stroke="#d31414" strokeWidth="4" />
      <Port x={2026} y={1120} w={53} h={18} />
      <Port x={2096} y={1130} w={53} h={18} />
      <Port x={2167} y={1141} w={44} h={17} c="#5a5f66" />
      <Port x={2229} y={1150} w={44} h={17} c="#5a5f66" />
      <g stroke="#2c2a55" strokeWidth="1.500">
        <path d="M2290 1157L2302 1159L2313 1206L2301 1205Z" fill="#355f7e" /><path d="M2324 1162L2336 1164L2347 1211L2335 1210Z" fill="#355f7e" />
      </g>
      <path d="M2294 1164L2304 1202M2328 1169L2338 1207" stroke="#27b5dc" strokeWidth="3" />
      <path d="M2432 1157L2510 1168L2523 1238L2446 1227Z" fill="#ff7b05" stroke="#5c3a14" strokeWidth="2" />
      <path d="M2436 1158L2448 1223L2522 1234M2438 1162L2508 1172" stroke="#a34d04" strokeWidth="1.500" />
      <g fill="#1c1c1c"><ellipse cx="2465" cy="1184" rx="13" ry="16" transform="rotate(-12 2465 1184)" /><ellipse cx="2492" cy="1190" rx="14" ry="17" /><ellipse cx="2484" cy="1208" rx="13" ry="15" /><circle cx="2479" cy="1195" r="11" /></g>
      <path d="M2468 1202L2482 1192M2475 1202L2477 1210" stroke="#b9b9b9" strokeWidth="4" />
      <Screw x={2060} y={1210} /><Screw x={2349} y={1248} /><Screw x={1806} y={1351} /><Screw x={2095} y={1384} />

      {/* view triad */}
      <path d="M661.500 1617L678 1651L673 1651.500L681 1697L672 1698L663 1652.500L658 1655Z" fill="#0648f5" />
      <path d="M752 1759L773 1761L771 1756L798 1770L770 1777L774 1771L752 1769Z" fill="#d03232" />
      <path d="M752 1767L774 1770L798 1770L770 1777L774 1771L752 1769Z" fill="#8c1f1f" />
      <path d="M630 1782L607 1794L608 1789L589 1810L617 1806L613 1803L631 1792Z" fill="#21691f" />
      <path d="M677 1697L740 1705L755 1785L699 1816L636 1808L620 1728Z" fill="#fff" />
      <path d="M677 1697L740 1705L755 1785L699 1816L636 1808L620 1728ZM677 1697L692 1777L755 1785M692 1777L636 1808" stroke="#b0b0b0" strokeWidth="1.600" />
      <g className="font-['Liberation_Sans',sans-serif] text-[38px]" stroke="none">
        <text x="644" y="1604" fill="#0648f5">Z</text>
        <text x="806" y="1786" fill="#d03232">X</text>
        <text x="558" y="1833" fill="#2f9a2f">Y</text>
      </g>
    </svg>
  );
}

function Gradients() {
  return (
    <svg width="0" height="0" className="absolute">
      <defs>
        <linearGradient id="goggle"><stop stopColor="#888" /><stop offset="1" stopColor="#666" /></linearGradient>
        <linearGradient id="sky" x1="0" y1="0" x2="0" y2="1"><stop stopColor="#0a4fa0" /><stop offset=".6" stopColor="#bfe3f5" /><stop offset="1" stopColor="#fff" /></linearGradient>
        <linearGradient id="steel"><stop stopColor="#d8d8d8" /><stop offset=".5" stopColor="#c4c4c4" /><stop offset="1" stopColor="#8c8c8c" /></linearGradient>
        <radialGradient id="gold" cx=".55" cy=".4" r=".6"><stop stopColor="#f5cf5c" /><stop offset=".5" stopColor="#d9aa2a" /><stop offset="1" stopColor="#8a6900" /></radialGradient>
        <linearGradient id="bgfade" x1="0" y1="0" x2="0" y2="1"><stop stopColor="#1c1c1c" /><stop offset="1" stopColor="#8f8f8f" /></linearGradient>
        <linearGradient id="bulb" x1="0" y1="0" x2="0" y2="1"><stop stopColor="#fff0a0" /><stop offset="1" stopColor="#ffc80a" /></linearGradient>
        <linearGradient id="rainbow" x1="0" y1="0" x2="0" y2="1"><stop stopColor="#ff0000" /><stop offset=".25" stopColor="#ffd800" /><stop offset=".5" stopColor="#2bff00" /><stop offset=".75" stopColor="#00e5ff" /><stop offset="1" stopColor="#0030ff" /></linearGradient>
      </defs>
    </svg>
  );
}

export default function App() {
  return (
    <div className="w-[3840px] h-[2038px] bg-[#323232] text-white overflow-hidden flex flex-col font-['Open_Sans','Noto_Sans',sans-serif]">
      <Gradients />
      <div className="h-[146px] shrink-0 flex flex-col bg-linear-to-r from-[#00638a] via-[#1b7899] to-[#2f89a6]">
        <TitleBar />
        <TabRow />
      </div>
      <Ribbon />
      <SelectionBar />
      <div className="flex h-[1525px] shrink-0">
        <Rail />
        <Navigator />
        <div className="flex flex-col flex-1">
          <FileTabs />
          <div className="pl-px"><Scene /></div>
        </div>
      </div>
      <div className="h-[53px] border-t border-[#1e1e1e] shrink-0">
        <Fit className="ml-[1893px] w-[661px] pt-[2px] text-[34px] leading-[50px] font-bold">Restore data was reset by this operation</Fit>
      </div>
    </div>
  );
}
